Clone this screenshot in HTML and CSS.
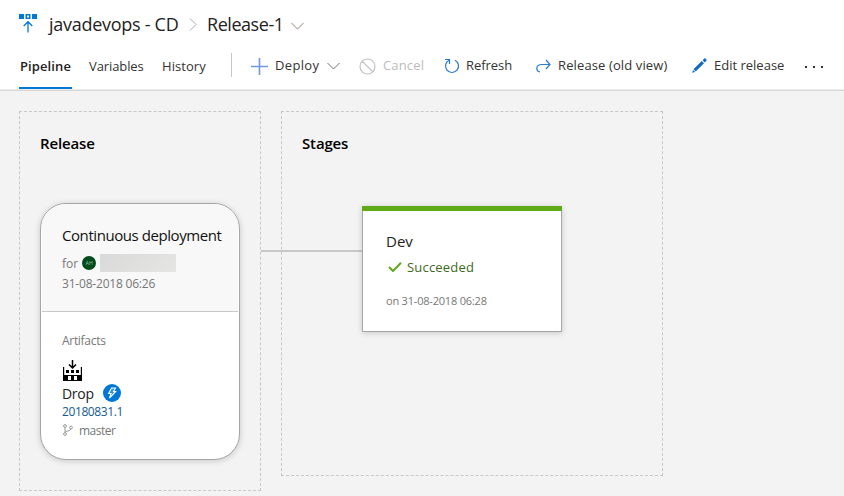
FILE: index.html
```html
<!DOCTYPE html>
<html lang="en">
<head>
<meta charset="utf-8">
<title>Release-1</title>
<link rel="stylesheet" href="styles.css">
</head>
<body>
<header class="header">
  <div class="crumbs">
    <svg class="logo" width="19" height="19" viewBox="0 0 19 19"><path fill="#0078d7" d="M0 0h5v5H0zM13 0h5v5h-5zM6.500 0h5v5h-5z"/><path fill="#fff" d="M8 1.500h2v2H8z"/><path fill="none" stroke="#0078d7" stroke-width="1.300" d="M9 18.500V8M4.700 12L9 7.700l4.300 4.300"/></svg>
    <span class="crumb crumb-project">javadevops - CD</span>
    <svg class="sep" width="8" height="13" viewBox="0 0 8 13"><path fill="none" stroke="#aaa" d="M1 .5l6 6-6 6"/></svg>
    <span class="crumb crumb-release">Release-1</span>
    <svg class="caret" width="13" height="8" viewBox="0 0 13 8"><path fill="none" stroke="#c0b3ac" stroke-width="1.100" d="M.5 1l6 6 6-6"/></svg>
  </div>
  <nav class="toolbar">
    <a class="tab active">Pipeline</a>
    <a class="tab">Variables</a>
    <a class="tab t-history">History</a>
    <i class="divider"></i>
    <svg width="17" height="17" viewBox="0 0 17 17"><path stroke="#6f9add" stroke-width="1.600" d="M0 8.500h17M8.500 0v17"/></svg>
    <span class="cmd t-deploy">Deploy</span>
    <svg width="13" height="8" viewBox="0 0 13 8"><path fill="none" stroke="#6c6c78" d="M.5 1l6 6 6-6"/></svg>
    <svg width="17" height="17" viewBox="0 0 17 17"><path fill="none" stroke="#c4c4c4" stroke-width="1.200" d="M3 3l11 11M16 8.500a7.500 7.500 0 1 1-15 0a7.500 7.500 0 0 1 15 0z"/></svg>
    <span class="cmd disabled">Cancel</span>
    <svg width="16" height="16" viewBox="0 0 16 16"><path fill="none" stroke="#2a7cd0" stroke-width="1.200" d="M1 1.500h4.500V6M5.500 2A6.500 6.500 0 1 0 11 2.200"/></svg>
    <span class="cmd t-refresh">Refresh</span>
    <svg width="15" height="14" viewBox="0 0 15 14"><path fill="none" stroke="#2a7cd0" stroke-width="1.200" d="M10 1l4 4.500-4 4.500M14 5.500H6Q.8 5.500.8 9.500Q.8 12.500 4 13"/></svg>
    <span class="cmd t-old">Release (old view)</span>
    <svg class="pencil" width="15" height="15" viewBox="0 0 15 15"><path fill="#0f6cc4" d="M9.800 3l2.200 2.200-8.300 8.300-2.200-2.200zM10.600 2.200L12.300.5q.6-.4 1.100 0l1.100 1.100q.3.500 0 1l-1.700 1.800zM1 11.900l2.100 2.100-2.900.8z"/></svg>
    <span class="cmd">Edit release</span>
    <svg width="18" height="4" viewBox="0 0 18 4"><path fill="#333" d="M0 2h2v2H0zM8 2h2v2H8zM16 2h2v2h-2z"/></svg>
  </nav>
</header>
<main class="canvas">
  <section class="panel release">
    <h2>Release</h2>
    <div class="release-card">
      <div class="trigger">
        <div class="trigger-title">Continuous deployment</div>
        <div class="for-row"><span>for</span><span class="avatar">AH</span><i class="redacted"></i></div>
        <div class="date">31-08-2018 06:26</div>
      </div>
      <div class="artifacts">
        <div class="artifacts-label">Artifacts</div>
        <svg class="factory" width="19" height="21" viewBox="0 0 19 21"><path fill="#000" fill-rule="evenodd" d="M0 7h1.200v8h16.600V7H19v14H0zM5 16v4h3v-4zM11 16v4h3v-4z"/><path fill="#000" d="M3 10h3v3H3zM8 10h3v3H8zM13 10h3v3h-3z"/><path fill="none" stroke="#000" stroke-width="1.500" d="M9.500 0v7.500M6 4.500L9.500 8 13 4.500"/></svg>
        <div class="drop-row"><span class="drop">Drop</span><svg width="18" height="18" viewBox="0 0 18 18"><circle cx="9" cy="9" r="9" fill="#0078d7"/><path fill="#3193e0" stroke="#fff" stroke-width="1.100" d="M8.500 4h4l-2 3.500h2.200L6.500 14l1.500-4.500H5.600z"/></svg></div>
        <div class="build">20180831.1</div>
        <div class="branch"><svg width="10" height="12" viewBox="0 0 10 12"><g fill="none" stroke="#999"><circle cx="2" cy="2" r="1.400"/><circle cx="2" cy="10" r="1.400"/><circle cx="8" cy="3.500" r="1.400"/><path d="M2 3.500v5M8 5Q7.500 7 2.500 7.500"/></g></svg><span>master</span></div>
      </div>
    </div>
  </section>
  <section class="panel stages">
    <h2>Stages</h2>
    <i class="connector"></i>
    <div class="stage-card">
      <div class="stage-name">Dev</div>
      <div class="status"><svg width="14" height="10" viewBox="0 0 14 10"><path fill="none" stroke="#5fa81c" stroke-width="2" d="M1 5l4 4 8-8.200"/></svg><span>Succeeded</span></div>
      <div class="stage-date">on 31-08-2018 06:28</div>
    </div>
  </section>
</main>
</body>
</html>
```
FILE: styles.css
```css
* { box-sizing: border-box; }
html, body { height: 100%; }
body {
  margin: 0;
  overflow: hidden;
  background: #f3f3f3;
  font-family: "Open Sans", "Noto Sans", sans-serif;
  font-size: 13px;
  color: #333;
  white-space: nowrap;
}
svg { display: block; flex: none; }
.header { height: 91px; background: #fff; border-bottom: 1px solid #d6d6d6; box-shadow: inset 0 -1px #ebebeb; }
.crumbs { display: flex; height: 43px; padding-left: 19px; }
.logo { margin-top: 14px; }
.crumb { font-size: 18px; line-height: 24px; margin-top: 12px; color: #222; }
.crumb-project { width: 129px; margin-left: 11px; letter-spacing: -0.28px; }
.sep { margin: 18px 0 0 11px; }
.crumb-release { width: 76px; margin-left: 10px; letter-spacing: -0.45px; }
.caret { margin: 22px 0 0 8px; }
.toolbar {
  display: grid;
  grid-template-columns: 70px 73px 69px 20px 24px 52px 32px 24px 61px 22px 70px 22px 134px 22px 91px 18px;
  align-items: center;
  height: 46px;
  padding-left: 19px;
}
.tab { height: 46px; line-height: 46px; letter-spacing: -0.1px; }
.t-history { letter-spacing: 0.05px; }
.active { width: 53px; padding-left: 1px; font-weight: 600; color: #222; border-bottom: 2px solid #0078d7; letter-spacing: 0.1px; }
.divider { width: 1px; height: 24px; background: #c8c8c8; margin-bottom: 3px; }
.cmd { line-height: 44px; height: 46px; letter-spacing: 0; }
.t-deploy { letter-spacing: 0.35px; }
.t-refresh { letter-spacing: -0.05px; }
.t-old { letter-spacing: 0.12px; }
.disabled { color: #bcbcbc; letter-spacing: 0.15px; }
.pencil { margin-bottom: 1px; }
.canvas { display: flex; align-items: flex-start; gap: 20px; padding: 20px 0 0 19px; }
.panel { position: relative; border: 1px dashed #c8c8c8; padding: 21px 20px 0; }
.release { width: 242px; height: 380px; }
.stages { width: 382px; height: 365px; }
h2 { margin: 0; font-size: 15px; line-height: 20px; font-weight: 600; color: #000; letter-spacing: -0.15px; }
.release-card {
  width: 200px;
  height: 257px;
  margin-top: 50px;
  background: #fff;
  border: 1px solid #a6a6a6;
  border-radius: 26px;
  box-shadow: 0 1px 6px rgba(0, 0, 0, .18);
  overflow: hidden;
}
.trigger { height: 108px; margin: 0 1px; padding: 21px 0 0 20px; background: #f8f8f8; border-bottom: 1px solid #c8c8c8; color: #777; }
.trigger-title { font-size: 15px; line-height: 20px; color: #111; letter-spacing: -0.43px; }
.for-row { display: flex; align-items: center; height: 18px; margin-top: 9px; font-size: 12px; }
.avatar { width: 14px; height: 14px; margin-left: 4px; border-radius: 50%; background: #004b1c; color: #9ec5a8; font-size: 5px; line-height: 14px; text-align: center; }
.redacted { width: 76px; height: 18px; margin-left: 4px; background: linear-gradient(135deg, #d9d9d9, #e5e5e3); }
.date { margin-top: 3px; font-size: 12px; line-height: 18px; letter-spacing: -0.2px; }
.artifacts { padding: 21px 0 0 21px; }
.artifacts-label { font-size: 12px; line-height: 16px; color: #777; letter-spacing: -0.3px; }
.factory { margin: 11px 0 0 1px; }
.drop-row { display: flex; height: 22px; margin-top: 2px; }
.drop { width: 41px; font-size: 14px; line-height: 22px; color: #222; letter-spacing: -0.3px; }
.drop-row svg { margin-top: 1px; }
.build { margin-top: -1px; font-size: 12px; line-height: 16px; color: #135c94; letter-spacing: -0.4px; }
.branch { display: flex; align-items: center; height: 20px; font-size: 12px; color: #777; letter-spacing: -0.5px; }
.branch svg { margin: 0 6px 0 1px; }
.connector { position: absolute; left: -21px; top: 138px; width: 101px; height: 2px; background: #c8c8c8; }
.stage-card {
  position: relative;
  width: 200px;
  height: 126px;
  margin: 53px 0 0 60px;
  padding: 20px 0 0 23px;
  background: #fff;
  border: 1px solid #a6a6a6;
  border-top: 0;
  box-shadow: 0 1px 6px rgba(0, 0, 0, .18);
}
.stage-card::before { content: ""; display: block; height: 5px; margin: -20px -1px 20px -24px; background: #60a917; }
.stage-name { font-size: 15px; line-height: 20px; color: #222; }
.status { display: flex; align-items: center; height: 20px; margin-top: 6px; color: #3c6a1c; letter-spacing: 0.2px; }
.status svg { margin: 0 5px 0 2px; }
.stage-date { margin-top: 16px; font-size: 11px; line-height: 16px; color: #777; letter-spacing: -0.2px; }
```
